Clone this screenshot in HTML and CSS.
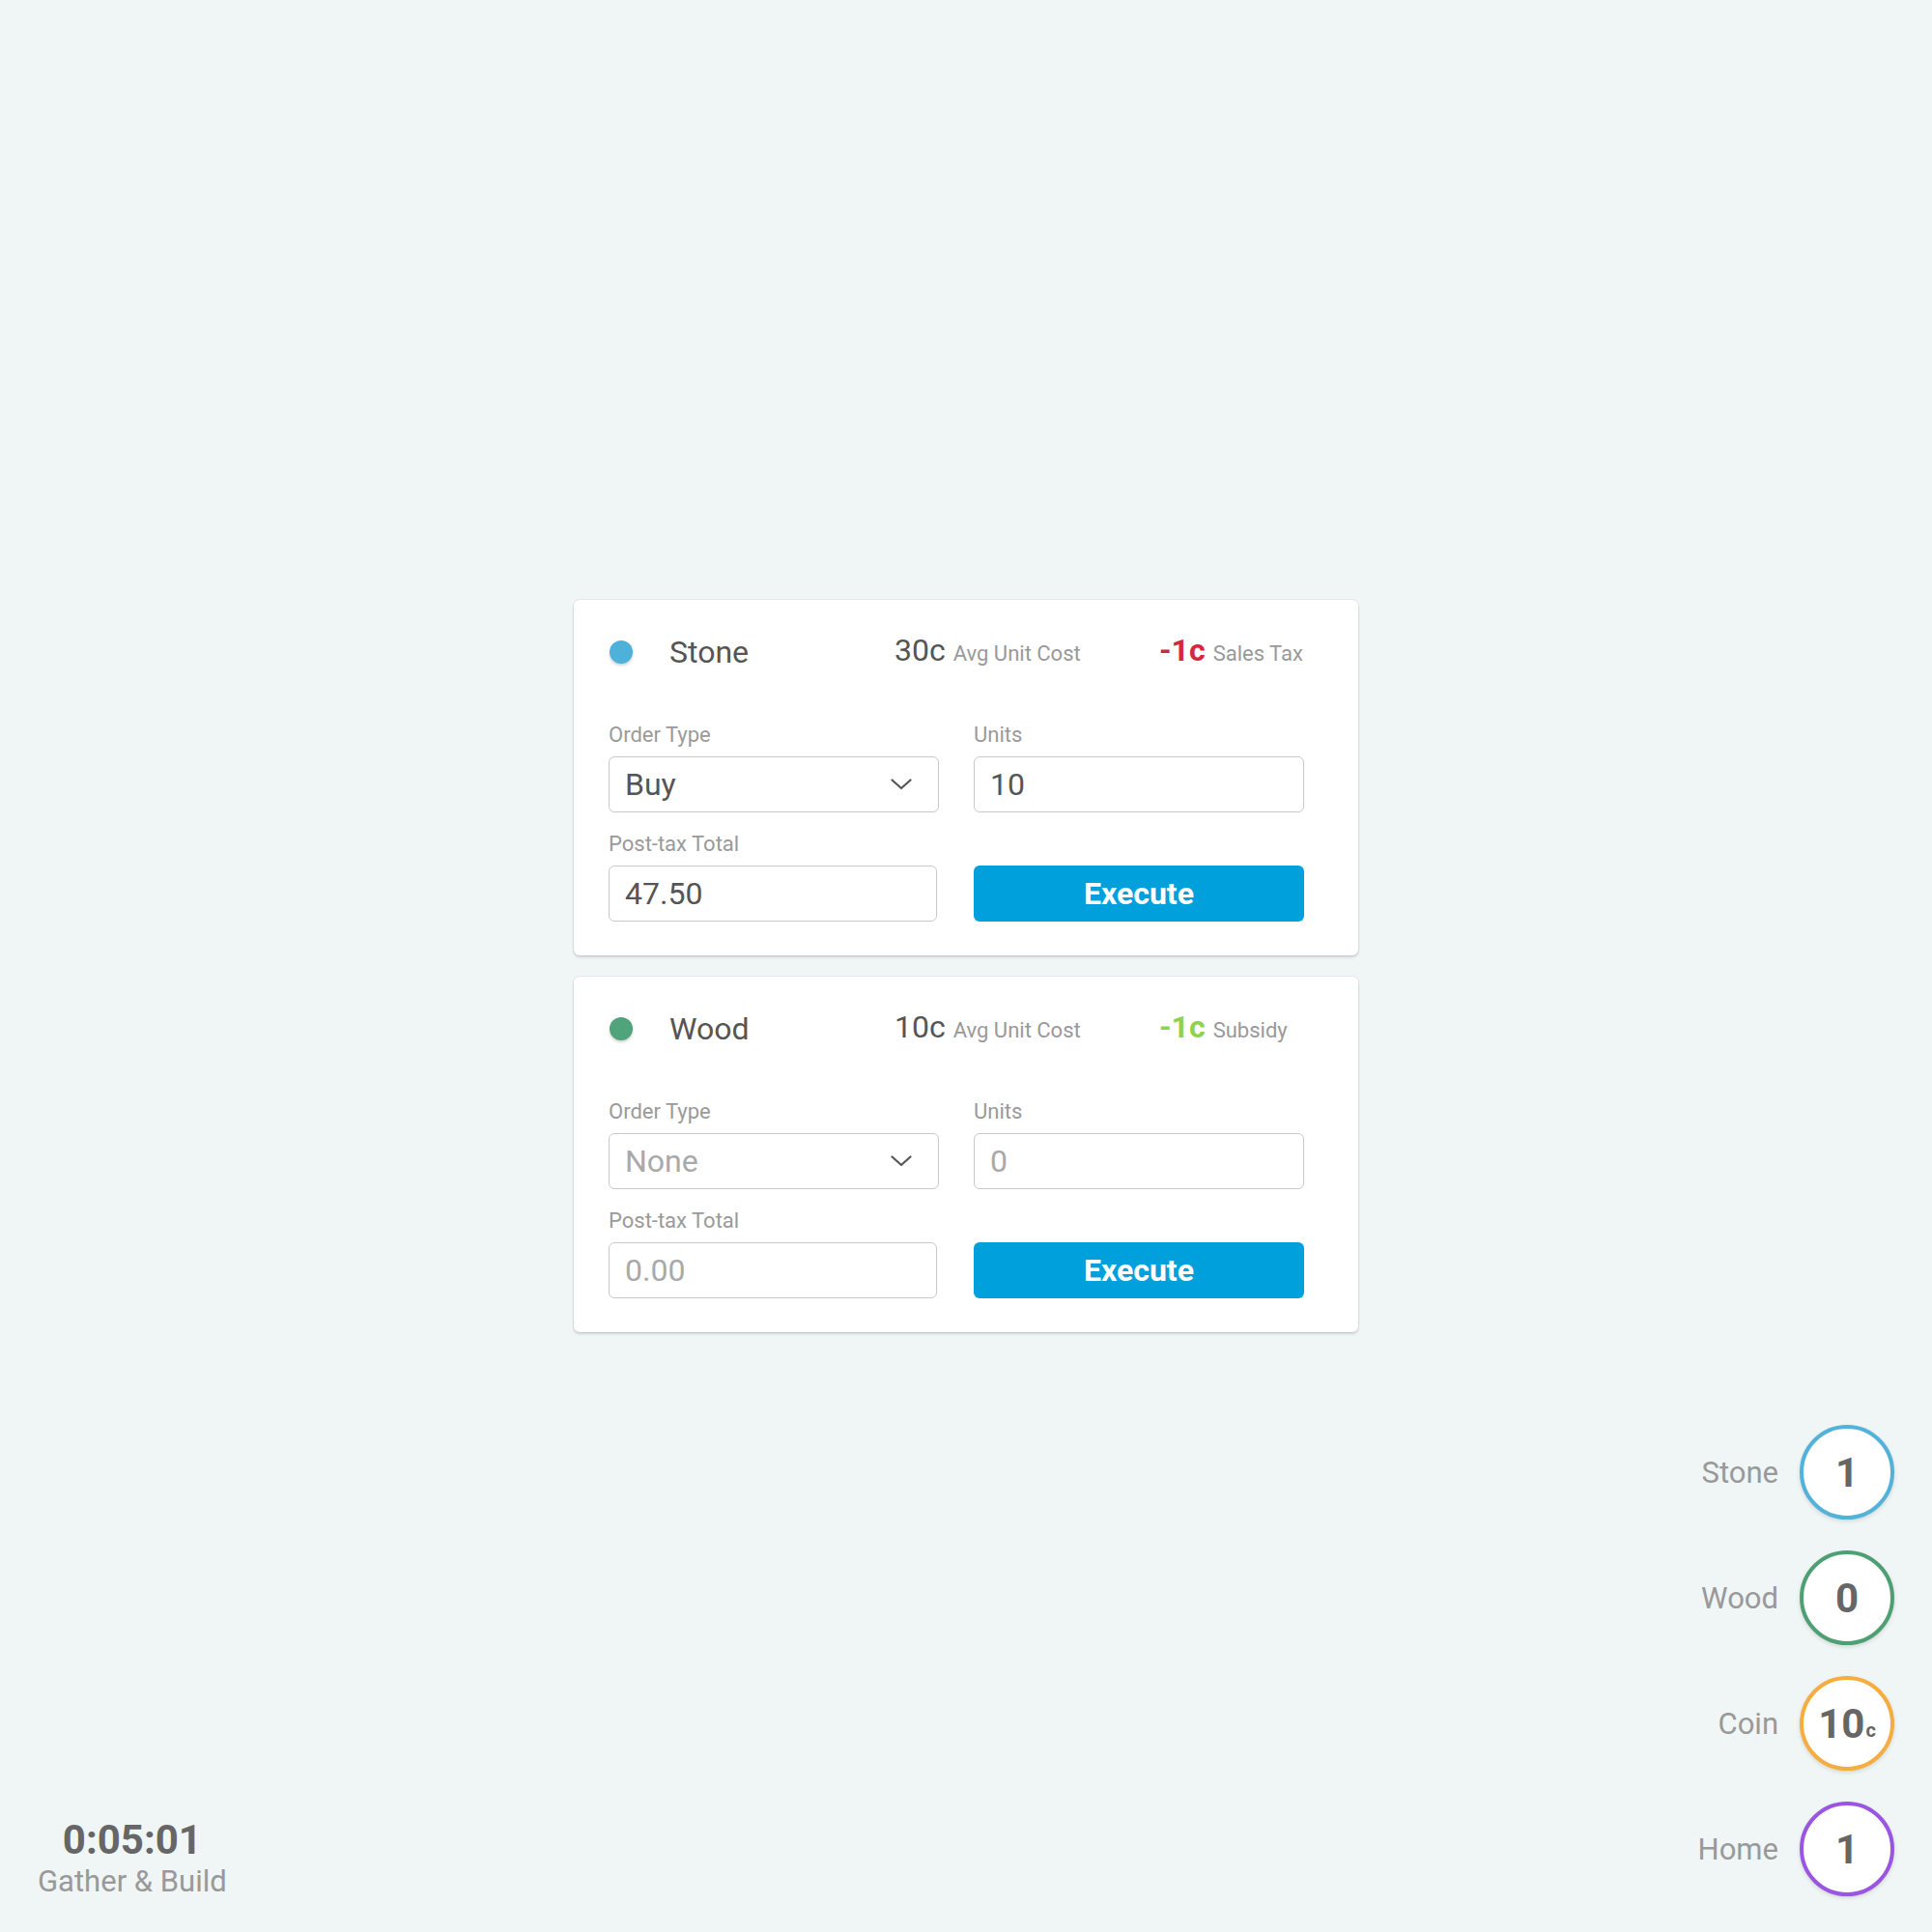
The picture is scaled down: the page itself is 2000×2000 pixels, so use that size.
FILE: index.html
```html
<!DOCTYPE html>
<html lang="en">
<head>
<meta charset="utf-8">
<title>Gather &amp; Build</title>
<link rel="stylesheet" href="styles.css">
</head>
<body>
<div class="page">
  <div class="left">
    <div class="timer">
      <div class="clock">0:05:01</div>
      <div class="phase">Gather &amp; Build</div>
    </div>
  </div>

  <main class="center">
    <section class="card">
      <div class="card-head">
        <div class="res">
          <span class="dot dot-stone"></span>
          <span class="res-name">Stone</span>
        </div>
        <div class="cost"><span class="big">30c</span><span class="small">Avg Unit Cost</span></div>
        <div class="tax"><span class="big bold red">-1c</span><span class="small">Sales Tax</span></div>
      </div>
      <div class="form">
        <div class="field">
          <div class="label">Order Type</div>
          <div class="box select">
            <span class="val">Buy</span>
            <svg class="chev" width="22" height="12" viewBox="0 0 22 12"><path d="M1.5 1.5 L11 10 L20.5 1.5" fill="none" stroke="#555" stroke-width="2.2" stroke-linecap="round" stroke-linejoin="round"/></svg>
          </div>
        </div>
        <div class="field">
          <div class="label">Units</div>
          <div class="box"><span class="val">10</span></div>
        </div>
        <div class="field field-narrow">
          <div class="label">Post-tax Total</div>
          <div class="box"><span class="val">47.50</span></div>
        </div>
        <div class="field field-btn">
          <button class="execute">Execute</button>
        </div>
      </div>
    </section>

    <section class="card">
      <div class="card-head">
        <div class="res">
          <span class="dot dot-wood"></span>
          <span class="res-name">Wood</span>
        </div>
        <div class="cost"><span class="big">10c</span><span class="small">Avg Unit Cost</span></div>
        <div class="tax"><span class="big bold green">-1c</span><span class="small">Subsidy</span></div>
      </div>
      <div class="form">
        <div class="field">
          <div class="label">Order Type</div>
          <div class="box select">
            <span class="val placeholder">None</span>
            <svg class="chev" width="22" height="12" viewBox="0 0 22 12"><path d="M1.5 1.5 L11 10 L20.5 1.5" fill="none" stroke="#555" stroke-width="2.2" stroke-linecap="round" stroke-linejoin="round"/></svg>
          </div>
        </div>
        <div class="field">
          <div class="label">Units</div>
          <div class="box"><span class="val placeholder">0</span></div>
        </div>
        <div class="field field-narrow">
          <div class="label">Post-tax Total</div>
          <div class="box"><span class="val placeholder">0.00</span></div>
        </div>
        <div class="field field-btn">
          <button class="execute">Execute</button>
        </div>
      </div>
    </section>
  </main>

  <aside class="right">
    <div class="inv">
      <div class="inv-row"><span class="inv-label">Stone</span><span class="ring ring-stone">1</span></div>
      <div class="inv-row"><span class="inv-label">Wood</span><span class="ring ring-wood">0</span></div>
      <div class="inv-row"><span class="inv-label">Coin</span><span class="ring ring-coin">10<span class="unit">c</span></span></div>
      <div class="inv-row"><span class="inv-label">Home</span><span class="ring ring-home">1</span></div>
    </div>
  </aside>
</div>
</body>
</html>
```

FILE: styles.css
```css
* { box-sizing: border-box; }

html, body {
  margin: 0;
  padding: 0;
  background: #f0f5f5;
  font-family: Roboto, "Liberation Sans", sans-serif;
}

.page {
  width: 2000px;
  height: 2000px;
  display: grid;
  grid-template-columns: 1fr 812px 1fr;
}

/* ---------- timer ---------- */
.left {
  display: flex;
  align-items: flex-end;
  padding: 0 0 31px 39px;
}
.timer {
  display: flex;
  flex-direction: column;
  align-items: center;
}
.clock {
  font-size: 42px;
  line-height: 44px;
  font-weight: 700;
  color: #666;
}
.phase {
  font-size: 31px;
  line-height: 42px;
  color: #999;
}

/* ---------- cards ---------- */
.center {
  display: flex;
  flex-direction: column;
  justify-content: center;
  gap: 22px;
}
.card {
  background: #fff;
  border-radius: 6px;
  box-shadow: 0 0 0 1px rgba(0, 0, 0, 0.05), 0 2px 3px rgba(0, 0, 0, 0.14);
  padding: 34px 56px 35px 36px;
}
.card-head {
  display: flex;
  align-items: center;
  height: 40px;
  margin-bottom: 53px;
}
.res {
  width: 296px;
  display: flex;
  align-items: center;
}
.dot {
  width: 24px;
  height: 24px;
  border-radius: 50%;
  margin-left: 1px;
  margin-right: 38px;
  box-shadow: 0 2px 3px rgba(0, 0, 0, 0.18);
}
.dot-stone { background: #4eb1d9; }
.dot-wood { background: #50a37a; }
.res-name {
  font-size: 32px;
  line-height: 40px;
  color: #555;
}
.cost { width: 274px; }
.cost, .tax {
  display: flex;
  align-items: baseline;
  line-height: 40px;
}
.big {
  font-size: 32px;
  color: #555;
}
.bold { font-weight: 700; }
.red { color: #d3283f; }
.green { color: #8ed34e; }
.small {
  font-size: 22px;
  color: #999;
  margin-left: 8px;
}

.form {
  display: grid;
  grid-template-columns: 342px 342px;
  column-gap: 36px;
  row-gap: 20px;
}
.field {
  display: flex;
  flex-direction: column;
}
.field-narrow { padding-right: 2px; }
.field-btn { justify-content: flex-end; }
.label {
  font-size: 22px;
  line-height: 26px;
  color: #9a9a9a;
  margin-bottom: 9px;
}
.box {
  height: 58px;
  border: 1px solid #c9c9c9;
  border-radius: 6px;
  background: #fff;
  display: flex;
  align-items: center;
  justify-content: space-between;
  padding: 0 27px 0 16px;
}
.val {
  font-size: 32px;
  color: #555;
}
.placeholder { color: #a9a9a9; }
.chev { display: block; }

.execute {
  height: 58px;
  width: 100%;
  border: none;
  border-radius: 6px;
  background: #00a0dc;
  color: #fff;
  font-family: Roboto, "Liberation Sans", sans-serif;
  font-size: 32px;
  font-weight: 700;
  padding: 0;
}

/* ---------- inventory ---------- */
.right {
  display: flex;
  align-items: flex-end;
  justify-content: flex-end;
  padding: 0 39px 37px 0;
}
.inv {
  display: flex;
  flex-direction: column;
  gap: 32px;
}
.inv-row {
  display: flex;
  align-items: center;
  justify-content: flex-end;
}
.inv-label {
  font-size: 31px;
  color: #999;
  margin-right: 22px;
}
.ring {
  width: 98px;
  height: 98px;
  border-radius: 50%;
  border: 4px solid #ccc;
  background: #fff;
  box-shadow: 0 2px 4px rgba(0, 0, 0, 0.12);
  display: flex;
  align-items: center;
  justify-content: center;
  font-size: 42px;
  font-weight: 700;
  color: #666;
}
.unit {
  font-size: 20px;
  align-self: center;
  margin-top: 14px;
  margin-left: 1px;
}
.ring-stone { border-color: #52b2d9; }
.ring-wood { border-color: #4f9f74; }
.ring-coin { border-color: #f6ad3f; }
.ring-home { border-color: #9a55e2; }
```
